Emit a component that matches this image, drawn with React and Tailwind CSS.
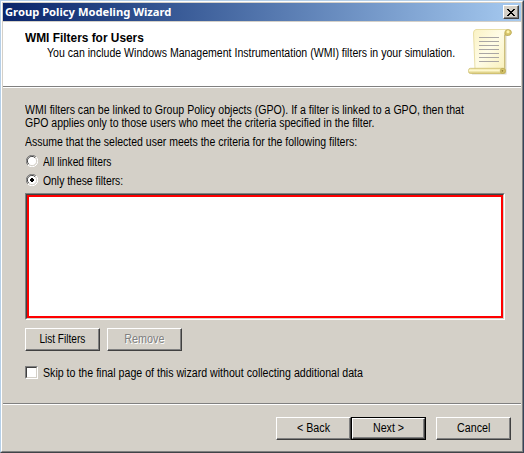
const raised =
  "h-[23px] w-[75px] border border-t-white border-l-white border-r-[#404040] border-b-[#404040] shadow-[inset_-1px_-1px_0_#808080] bg-[#d4d0c8] flex justify-center pt-[4px] leading-[13px] whitespace-nowrap";

function Radio({ checked }) {
  return (
    <svg className="block h-[12px] w-[12px] shrink-0" viewBox="0 0 12 12">
      <circle cx="6" cy="6" r="5" fill="#fff" />
      <path d="M1.9 10.1A5.5 5.5 0 0 1 10.1 1.9" fill="none" stroke="#808080" />
      <path d="M2.7 9.1A4.5 4.5 0 0 1 9.1 2.7" fill="none" stroke="#404040" />
      <path d="M10.1 1.9A5.5 5.5 0 0 1 1.9 10.1" fill="none" stroke="#fff" />
      <path d="M9.3 2.9A4.5 4.5 0 0 1 2.9 9.3" fill="none" stroke="#d4d0c8" />
      {checked && <path d="M5 4h2v1h1v2h-1v1h-2v-1h-1v-2h1z" fill="#000" />}
    </svg>
  );
}

function Scroll() {
  return (
    <svg className="block h-[50px] w-[46px] shrink-0" viewBox="0 0 46 50">
      <defs>
        <linearGradient id="paper" x1="0" y1="0" x2="1" y2="1">
          <stop offset="0" stopColor="#faf2c4" />
          <stop offset=".45" stopColor="#fffce6" />
          <stop offset="1" stopColor="#f8efb4" />
        </linearGradient>
        <linearGradient id="roll" x1="0" y1="0" x2="0" y2="1">
          <stop offset="0" stopColor="#ecdf98" />
          <stop offset=".4" stopColor="#fffad2" />
          <stop offset="1" stopColor="#d3c36c" />
        </linearGradient>
      </defs>
      <path d="M9 3H41V8H39.5V46.5H5V44L9 40Z" fill="#a8a592" opacity=".45" />
      <path d="M9 1.5H40Q38 3 38 7V42Q38 45 36 45.5H8V41L6.5 5Q6.5 2 9 1.5Z" fill="url(#paper)" stroke="#e3d794" strokeWidth=".8" />
      <path d="M37.5 7V42Q37.5 44 36 45" fill="none" stroke="#cdbf7c" />
      <path d="M38 7Q37 2 41 1.5Q44.5 1.5 44.5 4.7Q44 7.5 41 7.5Z" fill="#d8c66c" stroke="#b5a34b" strokeWidth=".7" />
      <circle cx="41" cy="3.8" r="1.5" fill="#fff4ac" />
      <path d="M12 9.5H32M12 13.5H32M12 17.5H32M12 21.5H32M12 25.5H32M12 29.5H32M12 33.5H32" stroke="#aaa6a4" />
      <rect x="1.5" y="40.3" width="37" height="5.2" rx="2" fill="url(#roll)" stroke="#cbbb6b" strokeWidth=".7" />
      <ellipse cx="35.8" cy="42.9" rx="2.6" ry="2.5" fill="#d8c76e" stroke="#b09d43" strokeWidth=".6" />
      <circle cx="35.4" cy="42.8" r=".9" fill="#8f7d34" />
    </svg>
  );
}

export default function App() {
  return (
    <div className="h-[453px] w-[524px] overflow-hidden bg-[#d4d0c8] border-t border-l border-r border-b border-t-[#b5cfe8] border-l-[#b5cfe8] border-r-[#34435a] border-b-[#404448] font-['Liberation_Sans',Arial,sans-serif] text-[12px] leading-[13px] text-black">
      <div className="flex h-[451px] w-[522px] flex-col border border-t-white border-l-white border-r-[#808080] border-b-[#808080] px-px pt-px">
        <div className="flex h-[18px] shrink-0 justify-between bg-linear-to-r from-[#0a246a] to-[#a6caf0] pt-[2px] pr-[2px] pl-[2px]">
          <span className="origin-left scale-x-[1.018] whitespace-nowrap font-['Noto_Sans',sans-serif] text-[11px] leading-[14px] font-bold text-white">
            Group Policy Modeling Wizard
          </span>
          <div className="flex h-[14px] w-[16px] items-center justify-center border border-t-white border-l-white border-r-[#404040] border-b-[#404040] bg-[#d4d0c8] shadow-[inset_-1px_-1px_0_#808080]">
            <svg className="block h-[7px] w-[8px]" viewBox="0 0 8 7" shapeRendering="crispEdges">
              <path d="M0 0h2v1h1v1h2v-1h1v-1h2v1h-1v1h-1v1h-1v1h1v1h1v1h1v1h-2v-1h-1v-1h-2v1h-1v1h-2v-1h1v-1h1v-1h1v-1h-1v-1h-1v-1h-1z" />
            </svg>
          </div>
        </div>
        <header className="mt-px flex h-[65px] shrink-0 border-b border-[#808080] bg-white">
          <div className="min-w-0 flex-1 whitespace-nowrap pt-[10px] pl-[22px]">
            <h1 className="origin-left scale-x-[.99] leading-[13px] font-bold">WMI Filters for Users</h1>
            <p className="mt-[2px] ml-[22px] origin-left scale-x-[.88]">
              You can include Windows Management Instrumentation (WMI) filters in your simulation.
            </p>
          </div>
          <div className="shrink-0 pt-[6px] pr-[8px]">
            <Scroll />
          </div>
        </header>
        <main className="h-[316px] shrink-0 border-t border-white pl-[22px] whitespace-nowrap">
          <p className="pt-[16px]">
            <span className="block origin-left scale-x-[.881]">WMI filters can be linked to Group Policy objects (GPO). If a filter is linked to a GPO, then that</span>
            <span className="block origin-left scale-x-[.876]">GPO applies only to those users who meet the criteria specified in the filter.</span>
          </p>
          <p className="mt-[6px] origin-left scale-x-[.875]">Assume that the selected user meets the criteria for the following filters:</p>
          <div className="mt-[6px] flex h-[13px] gap-[5px] pl-px">
            <Radio />
            <span className="mt-px origin-left scale-x-[.855]">All linked filters</span>
          </div>
          <div className="mt-[6px] flex h-[13px] gap-[5px] pl-px">
            <Radio checked />
            <span className="mt-px origin-left scale-x-[.865]">Only these filters:</span>
          </div>
          <div className="mt-[6px] h-[127px] w-[480px] border border-t-[#808080] border-l-[#808080] border-r-white border-b-white">
            <div className="h-[125px] border border-t-[#404040] border-l-[#404040] border-r-[#d4d0c8] border-b-[#d4d0c8]">
              <div className="h-[123px] border-2 border-[#ff0000] bg-white" />
            </div>
          </div>
          <div className="mt-[8px] flex gap-[7px]">
            <div className={raised}>
              <span className="scale-x-[.84]">List Filters</span>
            </div>
            <div className={raised}>
              <span className="scale-x-[.9] text-[#808080] [text-shadow:1px_1px_0_#fff]">Remove</span>
            </div>
          </div>
          <div className="mt-[15px] flex gap-[5px]">
            <div className="h-[13px] w-[13px] border border-t-[#808080] border-l-[#808080] border-r-white border-b-white">
              <div className="h-[11px] border border-t-[#404040] border-l-[#404040] border-r-[#d4d0c8] border-b-[#d4d0c8] bg-white" />
            </div>
            <span className="mt-px origin-left scale-x-[.885]">Skip to the final page of this wizard without collecting additional data</span>
          </div>
        </main>
        <footer className="flex h-[48px] shrink-0 border-t border-[#808080]">
          <div className="flex flex-1 justify-end border-t border-white pt-[12px] pr-[10px]">
            <div className={raised}>
              <span className="scale-x-[.89]">&lt; Back</span>
            </div>
            <div className="h-[23px] w-[75px] border border-black">
              <div className="flex h-[21px] justify-center border border-t-white border-l-white border-r-[#404040] border-b-[#404040] pt-[3px] shadow-[inset_-1px_-1px_0_#808080]">
                <span className="scale-x-[.89]">Next &gt;</span>
              </div>
            </div>
            <div className={raised + " ml-[10px]"}>
              <span className="scale-x-[.89]">Cancel</span>
            </div>
          </div>
        </footer>
      </div>
    </div>
  );
}
